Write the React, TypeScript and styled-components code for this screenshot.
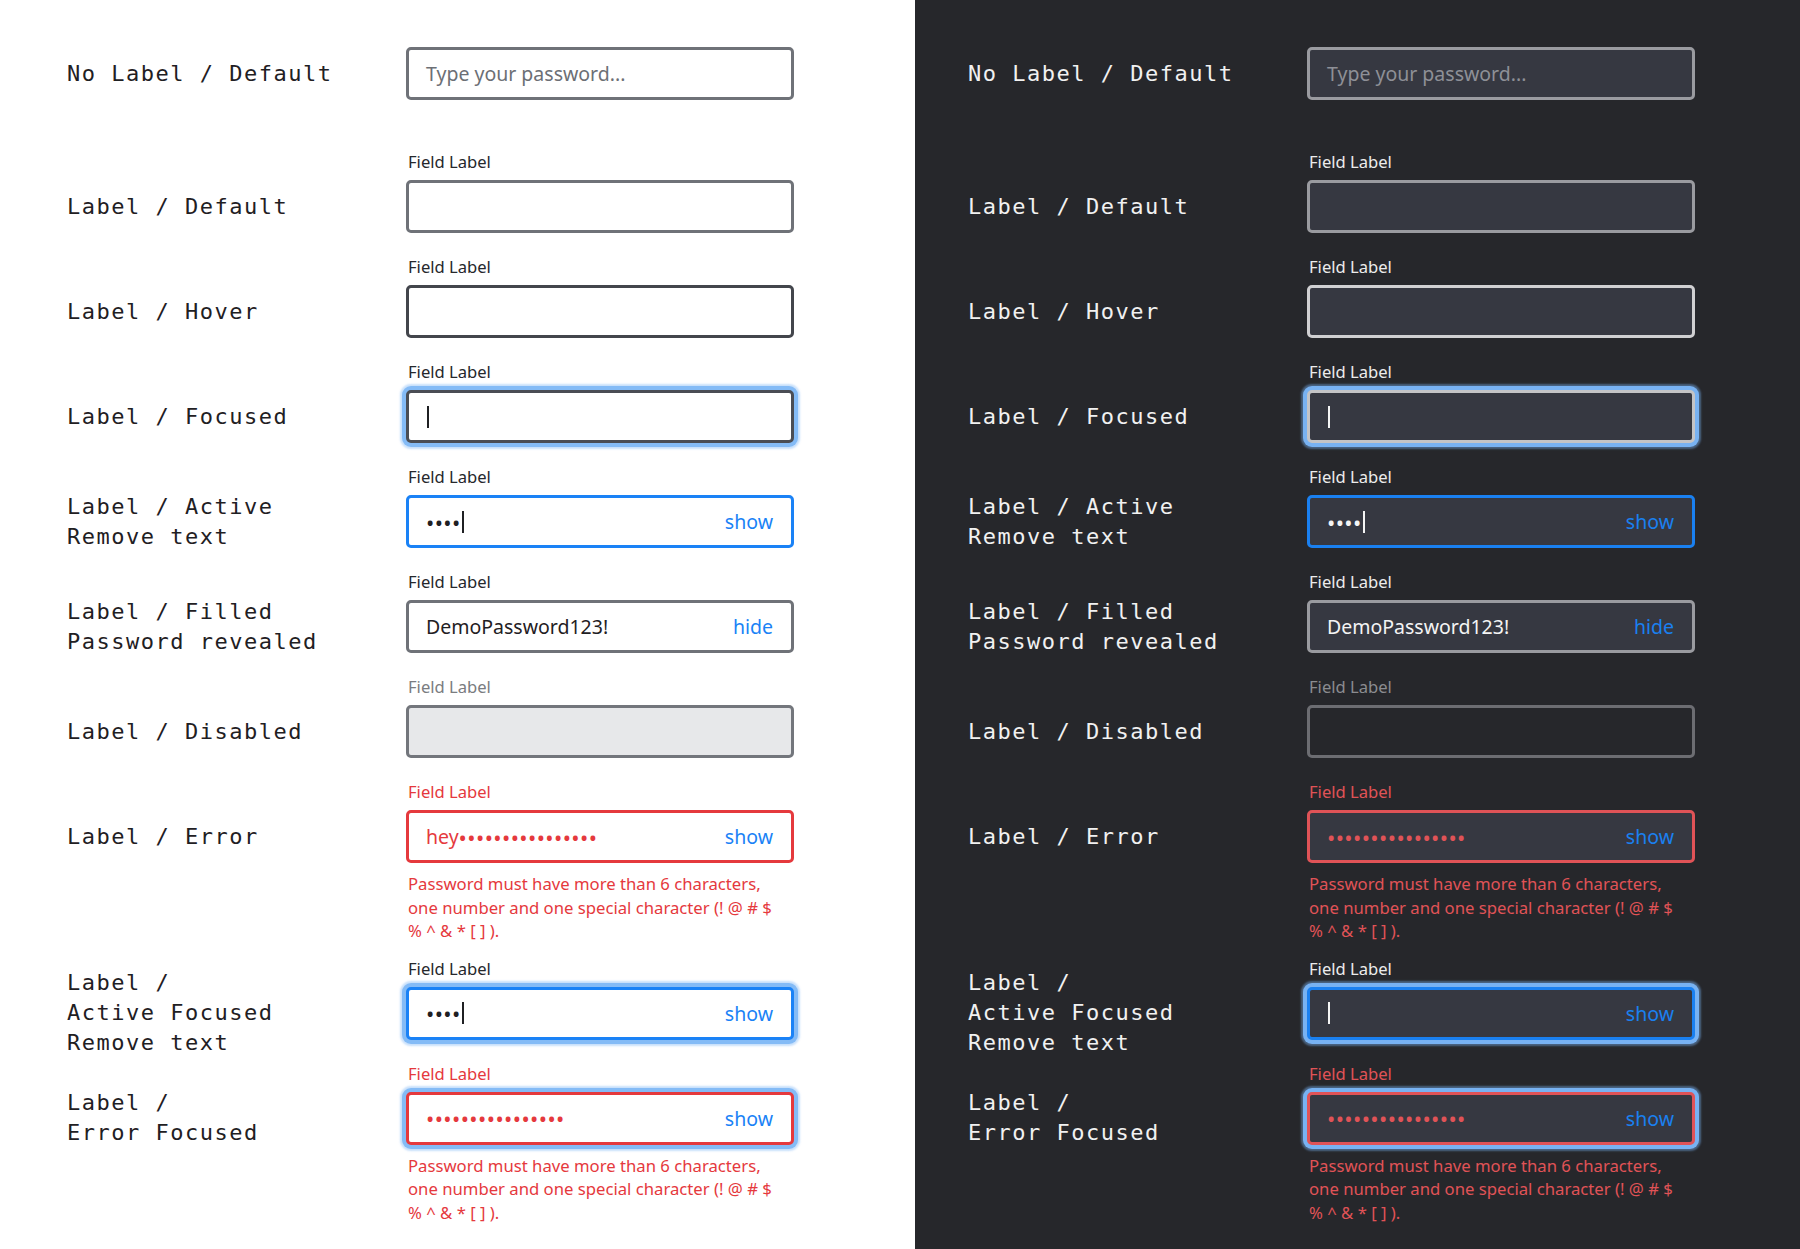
import React from 'react'
import styled, { createGlobalStyle, ThemeProvider, css } from 'styled-components'

type State =
  | 'default'
  | 'hover'
  | 'focused'
  | 'active'
  | 'filled'
  | 'disabled'
  | 'error'
  | 'activeFocused'
  | 'errorFocused'

const light = {
  bg: '#ffffff',
  pad: '67px',
  text: '#1f2023',
  fieldLabel: '#26282c',
  mutedLabel: '#7a7c80',
  inputBg: '#ffffff',
  border: '#6f7278',
  hoverBorder: '#43464c',
  focusBorder: '#4a4d54',
  disabledBg: '#e7e8ea',
  disabledBorder: '#73767c',
  placeholder: '#6c6f75',
  value: '#1f2023',
  blue: '#1a82f6',
  red: '#e5393d',
  glow: '#84bbf6',
  glowSoft: 'rgba(132, 187, 246, 0.45)',
}

const dark = {
  ...light,
  bg: '#26272b',
  pad: '53px',
  text: '#f1f1f1',
  fieldLabel: '#ececec',
  mutedLabel: '#8b8c90',
  inputBg: '#363841',
  border: '#9a9ba0',
  hoverBorder: '#d0d0d2',
  focusBorder: '#c4c4c6',
  disabledBg: 'transparent',
  disabledBorder: '#6c6d72',
  placeholder: '#8e9097',
  value: '#f4f4f4',
  blue: '#1a80f0',
  red: '#e05357',
  glow: '#78b2f2',
  glowSoft: 'rgba(120, 178, 242, 0.45)',
}

type Theme = typeof light

const GlobalStyle = createGlobalStyle`
  html, body {
    margin: 0;
    padding: 0;
    background: #ffffff;
  }
  * {
    box-sizing: border-box;
  }
`

const Page = styled.div`
  display: grid;
  grid-template-columns: 915px 885px;
  width: 1800px;
  min-height: 1249px;
`

const Panel = styled.section`
  display: flex;
  flex-direction: column;
  gap: 23px;
  padding: 47px 0 0 ${p => (p.theme as Theme).pad};
  background: ${p => (p.theme as Theme).bg};
  min-height: 1249px;
`

const Row = styled.div<{ $first?: boolean; $hasError?: boolean }>`
  display: grid;
  grid-template-columns: 339px 388px;
  grid-template-rows: auto 53px auto;
  grid-template-areas:
    '. label'
    'name box'
    '. err';
  margin-bottom: ${p => (p.$first ? '28px' : p.$hasError ? '-8px' : '0')};
`

const Name = styled.div`
  grid-area: name;
  align-self: center;
  font-family: 'DejaVu Sans Mono', monospace;
  font-size: 22px;
  letter-spacing: 1.5px;
  line-height: 30px;
  color: ${p => (p.theme as Theme).text};
  white-space: pre;
`

const FieldLabel = styled.div<{ $tone: 'normal' | 'muted' | 'error' }>`
  grid-area: label;
  font-family: 'Noto Sans', sans-serif;
  font-size: 16.6px;
  line-height: 22px;
  margin-bottom: 7px;
  padding-left: 2px;
  color: ${p => {
    const t = p.theme as Theme
    return p.$tone === 'muted' ? t.mutedLabel : p.$tone === 'error' ? t.red : t.fieldLabel
  }};
`

const glow = css`
  box-shadow: 0 0 0 4px ${p => (p.theme as Theme).glow}, 0 0 2px 6px ${p => (p.theme as Theme).glowSoft};
`

const stateStyles: Record<State, ReturnType<typeof css>> = {
  default: css``,
  hover: css`
    border-color: ${p => (p.theme as Theme).hoverBorder};
  `,
  focused: css`
    border-color: ${p => (p.theme as Theme).focusBorder};
    ${glow}
  `,
  active: css`
    border-color: ${p => (p.theme as Theme).blue};
  `,
  filled: css``,
  disabled: css`
    background: ${p => (p.theme as Theme).disabledBg};
    border-color: ${p => (p.theme as Theme).disabledBorder};
  `,
  error: css`
    border-color: ${p => (p.theme as Theme).red};
  `,
  activeFocused: css`
    border-color: ${p => (p.theme as Theme).blue};
    ${glow}
  `,
  errorFocused: css`
    border-color: ${p => (p.theme as Theme).red};
    ${glow}
  `,
}

const Box = styled.div<{ $state: State }>`
  grid-area: box;
  height: 53px;
  width: 388px;
  display: flex;
  align-items: center;
  padding: 0 18px 0 17px;
  border: 3px solid ${p => (p.theme as Theme).border};
  border-radius: 5px;
  background: ${p => (p.theme as Theme).inputBg};
  font-family: 'Noto Sans', sans-serif;
  font-size: 19.5px;
  ${p => stateStyles[p.$state]}
`

const Text = styled.span<{ $tone?: 'value' | 'placeholder' | 'error' }>`
  display: flex;
  align-items: center;
  flex: 1;
  white-space: pre;
  color: ${p => {
    const t = p.theme as Theme
    return p.$tone === 'placeholder' ? t.placeholder : p.$tone === 'error' ? t.red : t.value
  }};
`

const Dots = styled.span`
  letter-spacing: 0.4px;
  font-size: 22px;
  line-height: 1;
`

const Caret = styled.span`
  display: inline-block;
  width: 2px;
  height: 22px;
  margin-left: 1px;
  background: ${p => (p.theme as Theme).value};
`

const Toggle = styled.span`
  color: ${p => (p.theme as Theme).blue};
`

const ErrorText = styled.div`
  grid-area: err;
  margin-top: 9px;
  padding-left: 2px;
  font-family: 'Noto Sans', sans-serif;
  font-size: 16.7px;
  line-height: 23.5px;
  color: ${p => (p.theme as Theme).red};
`

type Spec = {
  name: string
  label?: 'normal' | 'muted' | 'error'
  state: State
  placeholder?: string
  prefix?: string
  value?: string
  dots?: number
  caret?: boolean
  toggle?: string
  error?: boolean
}

const buildRows = (isDark: boolean): Spec[] => [
  { name: 'No Label / Default', state: 'default', placeholder: 'Type your password...' },
  { name: 'Label / Default', label: 'normal', state: 'default' },
  { name: 'Label / Hover', label: 'normal', state: 'hover' },
  { name: 'Label / Focused', label: 'normal', state: 'focused', caret: true },
  { name: 'Label / Active\nRemove text', label: 'normal', state: 'active', dots: 4, caret: true, toggle: 'show' },
  { name: 'Label / Filled\nPassword revealed', label: 'normal', state: 'filled', value: 'DemoPassword123!', toggle: 'hide' },
  { name: 'Label / Disabled', label: 'muted', state: 'disabled' },
  { name: 'Label / Error', label: 'error', state: 'error', prefix: isDark ? '' : 'hey', dots: 16, toggle: 'show', error: true },
  {
    name: 'Label /\nActive Focused\nRemove text',
    label: 'normal',
    state: 'activeFocused',
    dots: isDark ? 0 : 4,
    caret: true,
    toggle: 'show',
  },
  { name: 'Label /\nError Focused', label: 'error', state: 'errorFocused', dots: 16, toggle: 'show', error: true },
]

const Field = ({ spec, first }: { spec: Spec; first: boolean }) => {
  const isError = spec.state === 'error' || spec.state === 'errorFocused'
  return (
    <Row $first={first} $hasError={spec.error}>
      {spec.label && <FieldLabel $tone={spec.label}>Field Label</FieldLabel>}
      <Name>{spec.name}</Name>
      <Box $state={spec.state}>
        <Text $tone={spec.placeholder ? 'placeholder' : isError ? 'error' : 'value'}>
          {spec.placeholder}
          {spec.value}
          {spec.prefix}
          {spec.dots ? <Dots>{'•'.repeat(spec.dots)}</Dots> : null}
          {spec.caret && <Caret />}
        </Text>
        {spec.toggle && <Toggle>{spec.toggle}</Toggle>}
      </Box>
      {spec.error && (
        <ErrorText>
          Password must have more than 6 characters,
          <br />
          one number and one special character (! @ # $
          <br />
          % ^ &amp; * [ ] ).
        </ErrorText>
      )}
    </Row>
  )
}

const Showcase = ({ isDark }: { isDark: boolean }) => (
  <ThemeProvider theme={isDark ? dark : light}>
    <Panel>
      {buildRows(isDark).map((spec, i) => (
        <Field key={i} spec={spec} first={i === 0} />
      ))}
    </Panel>
  </ThemeProvider>
)

const App = () => (
  <>
    <GlobalStyle />
    <Page>
      <Showcase isDark={false} />
      <Showcase isDark={true} />
    </Page>
  </>
)

export default App
